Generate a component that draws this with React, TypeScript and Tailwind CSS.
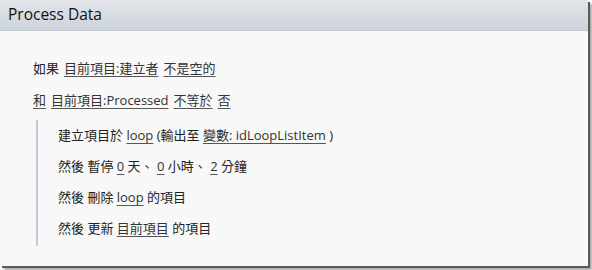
import React from "react";

const L = ({ children }: { children: React.ReactNode }) => (
  <span className="underline decoration-[#555] decoration-1 underline-offset-[3px] text-[#333]">{children}</span>
);

export default function App() {
  const font = { fontFamily: '"Open Sans", "Noto Sans CJK TC", sans-serif' };
  return (
    <div className="w-[592px] h-[270px] bg-white">
      <div
        className="w-[588px] h-[266px] bg-[#f8f8f8] flex flex-col shadow-[2px_2px_0_#5a5a5a,4px_4px_2px_rgba(0,0,0,0.35)]"
        style={font}
      >
        <div className="h-[31px] shrink-0 bg-gradient-to-b from-[#e2e6ea] to-[#cdd3da] border-b border-[#c4cad2] flex items-center pl-[8px]">
          <span className="text-[15.5px] text-[#111] leading-none">Process Data</span>
        </div>
        <div className="pl-[33px] pt-[27px] text-[13px] text-[#222] leading-5">
          <div className="h-5 flex items-center gap-[5px] whitespace-pre">
            <span>如果</span>
            <L>目前項目:建立者</L>
            <L>不是空的</L>
          </div>
          <div className="h-5 mt-3 flex items-center gap-[5px] whitespace-pre">
            <L>和</L>
            <L>目前項目:Processed</L>
            <L>不等於</L>
            <L>否</L>
          </div>
          <div className="mt-[10px] ml-[3px] border-l-2 border-[#c8c8dc] pl-[20px] pt-[5px] pb-[8px] flex flex-col gap-[11px]">
            <div className="h-5 flex items-center whitespace-pre">
              <span>建立項目於 </span>
              <L>loop</L>
              <span> (輸出至 </span>
              <L>變數: idLoopListItem</L>
              <span> )</span>
            </div>
            <div className="h-5 flex items-center whitespace-pre">
              <span>然後 暫停 </span>
              <L>0</L>
              <span> 天、 </span>
              <L>0</L>
              <span> 小時、 </span>
              <L>2</L>
              <span> 分鐘</span>
            </div>
            <div className="h-5 flex items-center whitespace-pre">
              <span>然後 刪除 </span>
              <L>loop</L>
              <span> 的項目</span>
            </div>
            <div className="h-5 flex items-center whitespace-pre">
              <span>然後 更新 </span>
              <L>目前項目</L>
              <span> 的項目</span>
            </div>
          </div>
        </div>
      </div>
    </div>
  );
}
